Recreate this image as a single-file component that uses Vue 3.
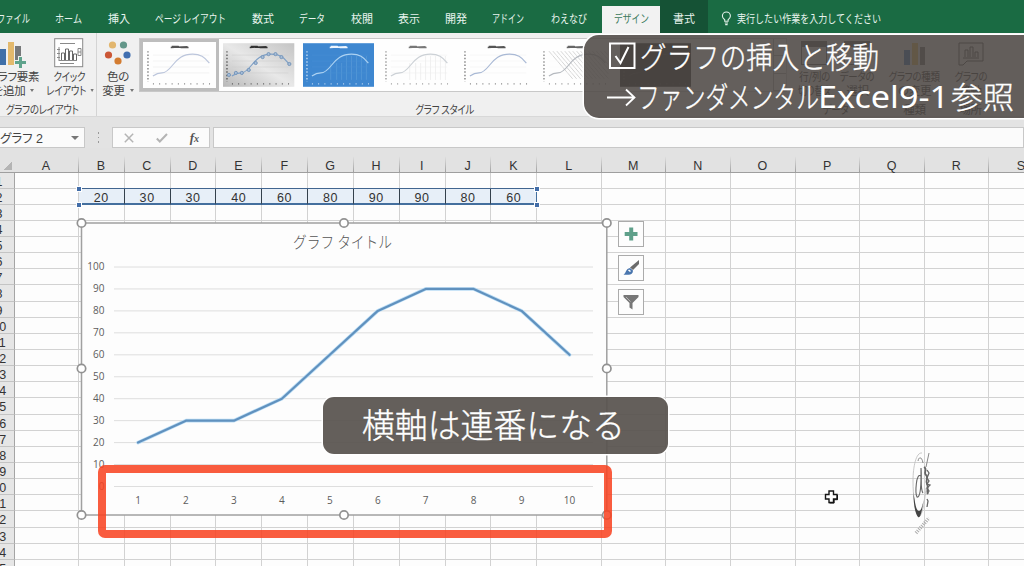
<template>
  <div class="excel">
    <nav class="tabs">
      <div
        v-for="tab in tabs"
        :key="tab.name"
        class="tab"
        :class="tab.state"
        :style="{ width: `${tab.width}px` }"
      >
        <svg class="tab-label" height="20" :width="tab.text">
          <text x="0" y="14" :textLength="tab.text" lengthAdjust="spacingAndGlyphs">{{ tab.name }}</text>
        </svg>
      </div>
      <div class="tell-me">
        <svg width="11" height="15" viewBox="0 0 11 15" fill="none" stroke="#e4f1ea" stroke-width="1.1">
          <path d="M3.7 10.2V8.7C2.2 7.6 1.4 6.5 1.4 5a4 4 0 0 1 8 0c0 1.5-.8 2.6-2.3 3.7v1.5zM3.8 12h3.2M4.2 13.6h2.4" />
        </svg>
        <svg class="tab-label" width="144" height="20">
          <text x="0" y="14" textLength="144" lengthAdjust="spacingAndGlyphs">実行したい作業を入力してください</text>
        </svg>
      </div>
    </nav>

    <section class="ribbon">
      <div class="group layout-group">
        <div class="tools">
          <div class="tool element-tool">
            <svg width="30" height="28" viewBox="0 0 30 28">
              <rect x="3" y="10" width="6" height="16" fill="#3f6fa8" />
              <rect x="11" y="3" width="6" height="23" fill="#e3b96c" />
              <rect x="18" y="7" width="6" height="16" fill="#77797a" />
              <path d="M21 17h5v4h4v5h-4v4h-5v-4h-4v-5h4z" fill="#f0f0f0" />
              <path d="M22 18h3v4h4v3h-4v4h-3v-4h-4v-3h4z" fill="#5fa38c" />
            </svg>
            <span>グラフ要素</span>
            <span>を追加<i class="caret"></i></span>
          </div>
          <div class="tool quick-tool">
            <svg width="30" height="30" viewBox="0 0 30 30" fill="none" stroke="#898989">
              <rect x=".7" y=".7" width="28" height="28" fill="#fff" />
              <path d="M6 5.5h15M5 9v14M3 11.5h3M3 15.5h3M3 19.5h3M5 22.5h18M6 25.5h14" />
              <path d="M7.5 22v-7h3v7M11.5 22v-11h3v11M15.5 22v-9h3v9M19.5 22v-6h3v6" stroke="#666" />
              <path d="M24 10.5h3v7h-3zM24 14h3" />
            </svg>
            <span class="condensed">クイック</span>
            <span class="condensed">レイアウト<i class="caret"></i></span>
          </div>
        </div>
        <div class="group-name layout-name condensed">グラフのレイアウト</div>
      </div>

      <div class="group styles-group">
        <div class="tools">
          <div class="tool color-tool">
            <svg width="30" height="28" viewBox="0 0 30 28">
              <circle cx="9.5" cy="6" r="3.6" fill="#e2b66e" />
              <circle cx="20.5" cy="6" r="3.6" fill="#64978a" />
              <circle cx="5.5" cy="16" r="3.6" fill="#cb5736" />
              <circle cx="24" cy="16" r="3.6" fill="#416fb0" />
              <circle cx="15" cy="22" r="3.6" fill="#d37c30" />
            </svg>
            <span>色の</span>
            <span>変更<i class="caret"></i></span>
          </div>
          <div class="gallery">
            <div v-for="(style, i) in styles" :key="i" class="thumb" :class="{ picked: i === 0 }">
              <svg width="72" height="44" viewBox="0 0 72 44" fill="none">
                <defs>
                  <linearGradient id="silver" x1="0" y1="1" x2="1" y2="0">
                    <stop offset="0" stop-color="#b8b8b8" />
                    <stop offset=".5" stop-color="#e8e8e8" />
                    <stop offset="1" stop-color="#c4c4c4" />
                  </linearGradient>
                </defs>
                <rect width="72" height="44" :fill="style.back" />
                <path v-if="style.lines" :d="style.lines" :stroke="style.lineColor" stroke-width=".6" />
                <path v-if="i < 6" d="M9 12h57M9 18h57M9 24h57M9 30h57" :stroke="style.grid" stroke-width=".5" />
                <path d="M27 4.3l17-.8M28 3.2h7M37 4.3h8" :stroke="style.ink" stroke-width="1.4" />
                <path d="M4 8v31" :stroke="style.ink" stroke-width="1.6" stroke-dasharray="1.5 1.9" opacity=".65" />
                <path d="M9 41h58" :stroke="style.ink" stroke-width="1.2" stroke-dasharray="1 5.3" opacity=".75" />
                <path d="M9 33c3-2 5-3 9-3s7-3 11-8c5-6 10-11 20-11 8 0 12 3 17 9" :stroke="style.curve" stroke-width="1.2" />
                <template v-if="i === 1">
                  <circle
                    v-for="dot in dots"
                    :key="dot[0]"
                    :cx="dot[0]"
                    :cy="dot[1]"
                    r="1.6"
                    stroke="#7696b9"
                    fill="#a6bdd8"
                  />
                </template>
              </svg>
            </div>
            <div class="gallery-scroll"><i></i><i></i><i></i></div>
          </div>
        </div>
        <div class="group-name styles-name condensed">グラフ スタイル</div>
      </div>

      <div class="group data-group">
        <div class="tools">
          <div class="tool"><i class="table-icon"></i><span class="condensed">行/列の</span><span class="condensed">切り替え</span></div>
          <div class="tool"><i class="table-icon"></i><span class="condensed">データの</span><span>選択</span></div>
        </div>
        <div class="group-name condensed">データ</div>
      </div>
      <div class="group kind-group">
        <div class="tool">
          <svg width="24" height="28" viewBox="0 0 24 28">
            <rect x="1" y="11" width="6" height="15" fill="#2c6cbd" />
            <rect x="9" y="4" width="6" height="22" fill="#efb84b" />
            <rect x="17" y="8" width="5" height="18" fill="#666" />
          </svg>
          <span class="condensed">グラフの種類</span><span>の変更</span>
        </div>
        <div class="group-name">種類</div>
      </div>
      <div class="group place-group">
        <div class="tool">
          <svg width="26" height="28" viewBox="0 0 26 28" fill="none" stroke="#444">
            <path d="M1 4h24v18H9l-4 4H1zM5 19h16M7 18v-7h3v7M12 18V8h3v10M17 18v-5h3v5" />
          </svg>
          <span class="condensed">グラフの</span><span>移動</span>
        </div>
        <div class="group-name">場所</div>
      </div>
    </section>

    <div class="formula-bar">
      <div class="name-box"><span>グラフ 2</span><i class="caret"></i></div>
      <div class="grip"><i></i><i></i><i></i></div>
      <div class="formula-tools">
        <svg width="10" height="10" viewBox="0 0 10 10" stroke="#b4b4b4" stroke-width="1.5"><path d="M.8.8l8.4 8.4M9.2.8L.8 9.2" /></svg>
        <svg width="12" height="10" viewBox="0 0 12 10" fill="none" stroke="#b4b4b4" stroke-width="2"><path d="M.8 5.5l3 3L11 1" /></svg>
        <span class="fx">f<small>x</small></span>
      </div>
      <div class="formula-input"></div>
    </div>

    <section class="sheet">
      <div class="corner"></div>
      <div v-for="col in columns" :key="col" class="col-head">{{ col }}</div>
      <template v-for="row in 25" :key="row">
        <div class="row-head">{{ row }}</div>
        <div
          v-for="(col, c) in columns"
          :key="col"
          class="cell"
          :class="{ selected: row === 2 && c > 0 && c < 11, last: c === 10 }"
        >{{ row === 2 && c > 0 ? values[c - 1] : '' }}</div>
      </template>
    </section>

    <i v-for="corner in ['tl', 'tr', 'bl', 'br']" :key="corner" class="range-handle" :class="corner"></i>

    <svg class="chart" width="538" height="304" viewBox="75 217 538 304">
      <rect x="81.5" y="223" width="525.3" height="292" fill="#fdfdfd" stroke="#a0a0a0" stroke-width="1.5" />
      <text class="chart-title" x="293" y="248" textLength="99" lengthAdjust="spacingAndGlyphs">グラフ タイトル</text>
      <g v-for="n in 11" :key="n">
        <line x1="114" x2="593" :y1="scaleY((n - 1) * 10)" :y2="scaleY((n - 1) * 10)" stroke="#dedede" />
        <text class="axis" x="104.5" :y="scaleY((n - 1) * 10) + 3" text-anchor="end">{{ (n - 1) * 10 }}</text>
      </g>
      <text v-for="(v, i) in values" :key="i" class="axis" :x="scaleX(i)" y="503.5" text-anchor="middle">{{ i + 1 }}</text>
      <polyline :points="points" fill="none" stroke="#b9dcf5" stroke-width="3.6" stroke-linejoin="round" stroke-linecap="round" />
      <polyline :points="points" fill="none" stroke="#6091be" stroke-width="2.2" stroke-linejoin="round" stroke-linecap="round" />
      <circle v-for="(h, i) in handles" :key="i" :cx="h[0]" :cy="h[1]" r="4.2" fill="#fff" stroke="#929292" stroke-width="1.7" />
    </svg>

    <div class="chart-buttons">
      <button>
        <svg width="20" height="20" viewBox="0 0 20 20"><path d="M8.2 3.5h4v4.600h4.300v3.800h-4.300v4.600h-4v-4.600H3.700V8.100h4.500z" fill="#5fa08a" /></svg>
      </button>
      <button>
        <svg width="20" height="20" viewBox="0 0 20 20">
          <path d="M18 2v4l-6 6-3-2.500z" fill="#6b6b6b" />
          <path d="M9 10l3 2.500c0 3-2 4-4.500 4.200h-5C5 15.500 4.800 10.500 9 10z" fill="#4a76ae" />
          <path d="M8 11.500l2 1.500-1 1-2-1.500z" fill="#fff" />
        </svg>
      </button>
      <button>
        <svg width="20" height="20" viewBox="0 0 20 20"><path d="M2.500 3h15v2l-6 6v6.500l-3-2V11l-6-6z" fill="#777" /><path d="M5 5l4.500 4.500" stroke="#b5b5b5" /></svg>
      </button>
    </div>

    <div class="axis-frame"></div>

    <svg class="pointer" width="16" height="16" viewBox="0 0 16 16">
      <path d="M6 2h4.500v3.500H14v4.500h-3.500v3.500H6V10H2.500V5.500H6z" fill="#fff" stroke="#161616" stroke-width="1.400" />
      <path d="M6.500 14h4.600v-3.300h3.400V6" fill="none" stroke="#111" />
    </svg>

    <svg class="logo" width="24" height="90" viewBox="0 0 24 90" fill="none" stroke="#666">
      <path d="M10 3C4 2 1 17 1 31s2 31 5 35c4 4 7-17 8-28" stroke="#bbb" stroke-width=".8" />
      <path d="M1.500 43c0 13 2 21 4.500 24 3 2 4-8 6-18-2 8-3 12-5 12-3 0-4-9-5.500-18z" fill="#444" stroke="none" />
      <path d="M6 11c1-5 4-4 5 2" stroke="#888" />
      <path d="M9 26c-5-4-6 17-4 21 3 1 4-9 4-20v-9c1 10-1 22 2 25" stroke-width="1.100" />
      <path d="M12 17c4 2-1 6 2 8s-1 6 1 9-1 6 1 10" stroke-width="1.800" />
      <path d="M15 20l2 3-2 5 2 3-2 3 3 1-3 3 2 3-2 3M15 49l1 2-1 6" stroke-width="1.300" />
      <path d="M17 3l-3 14" stroke="#888" />
      <path d="M4 83l13-15" stroke="#aaa" stroke-width="3.500" stroke-dasharray="1 1.200" />
    </svg>

    <aside class="note note-top">
      <svg width="440" height="83" viewBox="584 35 440 83">
        <rect x="610" y="43.500" width="24.500" height="24.500" fill="none" stroke="#fff" stroke-width="2" />
        <path d="M615.500 56l5 7 8-16" fill="none" stroke="#fff" stroke-width="2" />
        <text x="640" y="68" textLength="239" lengthAdjust="spacingAndGlyphs">グラフの挿入と移動</text>
        <path d="M607 97.500h27M626 89.500l8.500 8-8.500 8" fill="none" stroke="#fff" stroke-width="1.800" />
        <text x="637" y="108" textLength="182" lengthAdjust="spacingAndGlyphs">ファンダメンタル</text>
        <text class="latin" x="818" y="108" textLength="131" lengthAdjust="spacingAndGlyphs">Excel9-1</text>
        <text x="951" y="108" textLength="63" lengthAdjust="spacingAndGlyphs">参照</text>
      </svg>
    </aside>
    <aside class="note note-axis">
      <svg width="345" height="57">
        <text x="39" y="41" textLength="263" lengthAdjust="spacingAndGlyphs">横軸は連番になる</text>
      </svg>
    </aside>
  </div>
</template>

<script setup>
import { computed } from 'vue'

const tabs = [
  { name: 'ファイル', width: 58, text: 33 },
  { name: 'ホーム', width: 53, text: 27 },
  { name: '挿入', width: 47, text: 22 },
  { name: 'ページ レイアウト', width: 97, text: 71 },
  { name: '数式', width: 47, text: 22 },
  { name: 'データ', width: 52, text: 26 },
  { name: '校閲', width: 47, text: 22 },
  { name: '表示', width: 47, text: 22 },
  { name: '開発', width: 48, text: 22 },
  { name: 'アドイン', width: 56, text: 32 },
  { name: 'わえなび', width: 66, text: 36 },
  { name: 'デザイン', width: 58, text: 35, state: 'active' },
  { name: '書式', width: 48, text: 22, state: 'context' }
]

const hatch = Array.from({ length: 15 }, (_, i) => `M${9 + i * 4} 8l${Math.min(24, 60 - i * 4)} ${Math.min(28, 70 - i * 4.7)}`).join('')
const drops = [28, 34, 39, 44, 49, 54, 59, 64].map((x) => `M${x} ${x < 40 ? 20 : 13}V37`).join('')

const styles = [
  { back: '#fefefe', ink: '#555', curve: '#bcc6dc', grid: '#e8e8e8' },
  { back: 'url(#silver)', ink: '#333', curve: '#7d9fc6', grid: '#ccc' },
  { back: '#3e87d0', ink: '#eef6ff', curve: '#acd2f2', grid: '#4a90d6', lines: drops, lineColor: '#5e9fd9' },
  { back: '#fefefe', ink: '#777', curve: '#ccd1d6', grid: '#eee', lines: drops, lineColor: '#e6e6e6' },
  { back: '#fefefe', ink: '#555', curve: '#a9b9d5', grid: '#f0f0f0' },
  { back: '#fefefe', ink: '#666', curve: '#b5b9bf', grid: '#fafafa', lines: hatch, lineColor: '#bbb' },
  { back: '#1c1b1a', ink: '#444', curve: '#282828', grid: '#222' }
]
const dots = [[6, 32], [13, 30], [19, 30], [26, 27], [33, 20], [40, 14], [46, 11], [53, 11], [59, 14], [67, 21]]

const columns = 'ABCDEFGHIJKLMNOPQRS'.split('')
const values = [20, 30, 30, 40, 60, 80, 90, 90, 80, 60]

const handles = [
  [81.5, 223], [344, 223], [606.8, 223],
  [81.5, 368.5], [606.8, 368.5],
  [81.5, 515], [344, 515], [606.8, 515]
]

function scaleX(i) {
  return 138 + i * 47.95
}

function scaleY(v) {
  return 486.5 - v * 2.195
}

const points = computed(() => values.map((v, i) => `${scaleX(i)},${scaleY(v)}`).join(' '))
</script>

<style>
body {
  margin: 0;
  overflow: hidden;
}
</style>

<style scoped>
.excel {
  position: relative;
  width: 1024px;
  height: 566px;
  overflow: hidden;
  background: #e3e3e3;
  color: #444;
  font-family: "Liberation Sans", "Noto Sans CJK JP", sans-serif;
}

.tabs {
  display: flex;
  height: 33px;
  margin-left: -16px;
  background: #1a6b43;
}

.tab {
  flex: none;
  display: flex;
  justify-content: center;
  padding-top: 9px;
  box-sizing: border-box;
}

.tab-label {
  display: block;
  overflow: visible;
}

.tab-label text {
  font-family: "Noto Sans CJK JP", sans-serif;
  font-size: 11.5px;
  fill: #e8f4ee;
}

.tab.active {
  margin-top: 6px;
  padding-top: 3px;
  background: #f2f2f2;
}

.tab.active text {
  fill: #3b7a5c;
}

.tab.context {
  background: #155235;
}

.tell-me {
  display: flex;
  gap: 5px;
  padding: 9px 0 0 13px;
}

.tell-me > svg:first-child {
  margin-top: 2px;
}

.ribbon {
  display: flex;
  height: 83px;
  background: #f0f0f0;
  font-family: "Noto Sans CJK JP", sans-serif;
  font-feature-settings: "palt";
  font-size: 11.5px;
  line-height: 14px;
  letter-spacing: -0.3px;
  white-space: nowrap;
}

.group {
  flex: none;
  display: flex;
  flex-direction: column;
  align-items: center;
  box-sizing: border-box;
  padding-top: 4px;
}

.tools {
  display: flex;
  height: 65px;
}

.tool {
  display: flex;
  flex-direction: column;
  align-items: center;
  height: 65px;
}

.tool svg,
.table-icon {
  flex: none;
  height: 32px;
}

.condensed {
  transform: scaleX(0.82);
}

.caret {
  display: inline-block;
  margin: 0 0 3px 5px;
  border: 2.5px solid transparent;
  border-top: 3px solid #777;
  border-bottom: 0;
}

.group-name {
  height: 14px;
}

.layout-group {
  width: 97px;
  border-right: 1px solid #d4d4d4;
}

.element-tool {
  width: 60px;
  margin-left: -17px;
}

.element-tool svg {
  margin-left: -3px;
}

.quick-tool {
  width: 52px;
}

.quick-tool svg {
  margin-left: -1px;
}

.layout-name {
  margin-right: 12px;
}

.styles-group {
  width: 692px;
  align-items: flex-start;
}

.color-tool {
  width: 42px;
}

.gallery {
  display: flex;
  width: 648px;
  height: 54px;
  margin-top: 1px;
  box-sizing: border-box;
  border: 1px solid #c8c8c8;
  background: #fefefe;
}

.thumb {
  flex: none;
  display: flex;
  width: 79.3px;
  height: 52px;
  padding: 4px;
  box-sizing: border-box;
}

.thumb.picked {
  padding: 1px;
  border: 3px solid #bdbdbd;
}

.gallery-scroll {
  display: flex;
  flex-direction: column;
  margin-left: auto;
  width: 12px;
  border-left: 1px solid #aaa;
}

.gallery-scroll i {
  flex: 1;
  border-bottom: 1px solid #aaa;
}

.styles-name {
  margin-left: 312px;
}

.data-group {
  width: 94px;
}

.data-group .tools {
  gap: 1px;
}

.table-icon {
  width: 26px;
  height: 24px;
  margin: 4px 0;
  box-sizing: border-box;
  border: 1px solid #555;
  border-top-width: 6px;
}

.kind-group {
  width: 63px;
}

.place-group {
  width: 49px;
}

.data-group,
.kind-group,
.place-group {
  color: #222;
}

.formula-bar {
  display: flex;
  height: 21px;
  padding: 10px 0 0;
  border-top: 1px solid #d8d8d8;
}

.formula-bar > div {
  box-sizing: border-box;
  height: 21px;
}

.name-box,
.formula-tools,
.formula-input {
  border: 1px solid #c8c8c8;
  background: #fbfbfb;
}

.name-box {
  display: flex;
  align-items: center;
  justify-content: space-between;
  width: 85px;
  padding-right: 5px;
  border-left: 0;
  font-size: 12.5px;
  font-feature-settings: "palt";
}

.name-box .caret {
  border-width: 4px 4px 0;
  margin: 0;
}

.grip {
  display: flex;
  flex-direction: column;
  justify-content: center;
  align-items: center;
  gap: 3px;
  width: 27px;
}

.grip i {
  width: 1.5px;
  height: 1.5px;
  background: #999;
}

.formula-tools {
  display: flex;
  align-items: center;
  justify-content: space-between;
  width: 98px;
  padding: 0 10px 0 11px;
}

.fx {
  color: #555;
  font: italic bold 13px "Liberation Serif", serif;
}

.fx small {
  font-size: 10px;
}

.formula-input {
  flex: 1;
  margin-left: 3px;
}

.sheet {
  display: grid;
  grid-template-columns: 29.5px 64.4px repeat(10, 45.83px) repeat(8, 64.6px);
  grid-template-rows: 24.5px repeat(25, 16.15px);
  width: 1100px;
  margin-left: -15px;
  font-size: 12.5px;
  letter-spacing: 0.6px;
  text-align: center;
  color: #333;
}

.corner,
.col-head {
  box-sizing: border-box;
  border-bottom: 1px solid #9f9f9f;
  background: #e2e2e2;
}

.corner {
  background: linear-gradient(135deg, transparent 50%, #b4b4b4 50%) 18px 13px / 9px 9px no-repeat #e2e2e2;
}

.col-head {
  padding-top: 11px;
  line-height: 15px;
  border-right: 1px solid;
  border-image: linear-gradient(#e2e2e2 35%, #9c9c9c) 1;
}

.row-head,
.cell {
  box-sizing: border-box;
  border-right: 1px solid #d2d2d2;
  border-bottom: 1px solid #d2d2d2;
  background: #fdfdfd;
  line-height: 19px;
}

.row-head {
  border-right-color: #a5a5a5;
  border-bottom-color: #c4c4c4;
  background: #e6e6e6;
}

.cell.selected {
  border-right: 1px solid #34404c;
  border-bottom: 2px solid #446f9e;
  background: #e7eff8;
  box-shadow: 0 -1px #41658f;
  line-height: 19px;
}

.cell.selected.last {
  border-right-color: #446f9e;
}

.range-handle {
  position: absolute;
  width: 4px;
  height: 4px;
  background: #426da8;
  outline: 1px solid #fff;
}

.tl {
  left: 77px;
  top: 187px;
}

.tr {
  left: 535px;
  top: 187px;
}

.bl {
  left: 77px;
  top: 203px;
}

.br {
  left: 535px;
  top: 203px;
}

.chart {
  position: absolute;
  left: 75px;
  top: 217px;
}

.chart-title {
  font-family: "Noto Sans CJK JP", sans-serif;
  font-size: 16px;
  font-weight: 300;
  fill: #555;
}

.axis {
  font-family: "Open Sans", sans-serif;
  font-size: 10px;
  fill: #5c5c5c;
}

.chart-buttons {
  position: absolute;
  left: 618px;
  top: 221px;
  display: flex;
  flex-direction: column;
  gap: 8px;
}

.chart-buttons button {
  display: flex;
  align-items: center;
  justify-content: center;
  width: 26px;
  height: 26px;
  padding: 0;
  border: 1px solid #ababab;
  background: #fdfdfd;
}

.axis-frame {
  position: absolute;
  left: 98px;
  top: 465px;
  width: 514px;
  height: 73px;
  box-sizing: border-box;
  border: 8px solid rgba(248, 68, 34, 0.87);
  border-radius: 7px;
}

.pointer {
  position: absolute;
  left: 823px;
  top: 489px;
}

.logo {
  position: absolute;
  left: 912px;
  top: 450px;
}

.note {
  position: absolute;
  background: rgba(78, 73, 69, 0.88);
}

.note svg {
  display: block;
}

.note text {
  font-family: "Noto Sans CJK JP", sans-serif;
  font-size: 30px;
  font-weight: 300;
  fill: #fff;
  stroke: #fff;
  stroke-width: 0.35px;
}

.note .latin {
  font-family: "Noto Sans", sans-serif;
  font-weight: 400;
  stroke: none;
}

.note-top {
  left: 584px;
  top: 35px;
  width: 440px;
  height: 83px;
  border-radius: 15px 0 0 15px;
  box-shadow: 0 0 0 1.5px #fff;
}

.note-axis {
  left: 323px;
  top: 397px;
  width: 345px;
  height: 57px;
  border-radius: 11px;
  background: rgba(88, 83, 79, 0.93);
  box-shadow: 0 0 0 1.5px #fff;
}

.note-axis text {
  font-size: 34px;
}
</style>
